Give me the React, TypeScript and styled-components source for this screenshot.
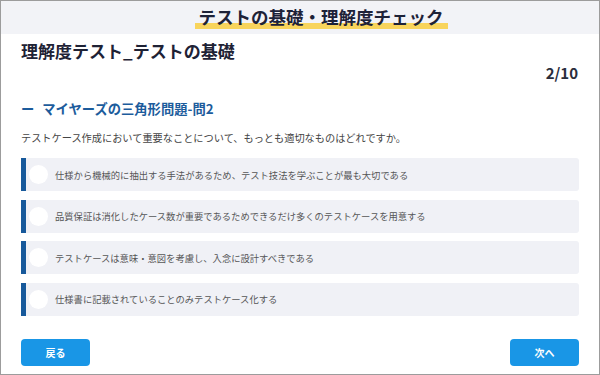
import React from 'react'
import styled, { createGlobalStyle } from 'styled-components'

const GlobalStyle = createGlobalStyle`
  * {
    box-sizing: border-box;
  }

  body {
    margin: 0;
    background: #ffffff;
    font-family: 'Noto Sans CJK JP', 'Noto Sans', sans-serif;
  }
`

const Page = styled.div`
  width: 600px;
  height: 375px;
  border: 1px solid #9c9c9c;
  display: flex;
  flex-direction: column;
  background: #ffffff;
`

const Header = styled.header`
  height: 33px;
  flex-shrink: 0;
  background: #f2f3f7;
  display: flex;
  justify-content: center;
  align-items: flex-start;
  padding: 5px 0 0 42px;
`

const HeaderTitle = styled.h1`
  margin: 0;
  padding: 0 4px 1px;
  font-size: 17.5px;
  line-height: 22px;
  font-weight: 700;
  color: #1d2238;
  background: linear-gradient(to bottom, transparent 17px, #f8d45c 17px);
`

const Content = styled.main`
  flex: 1;
  display: flex;
  flex-direction: column;
  padding: 5px 20px 0;
`

const TestTitle = styled.h2`
  margin: 0;
  font-size: 17px;
  line-height: 23px;
  font-weight: 700;
  color: #1e2235;
`

const Progress = styled.div`
  margin-top: 2px;
  text-align: right;
  font-size: 15px;
  line-height: 18px;
  font-weight: 700;
  color: #2a2e3c;
  padding-right: 1px;
`

const SectionHeading = styled.h3`
  margin: 16.5px 0 0;
  font-size: 13.3px;
  line-height: 20px;
  font-weight: 700;
  color: #1c5c9c;
  display: flex;
  gap: 8px;
`

const Question = styled.p`
  margin: 11.5px 0 0;
  font-size: 10.2px;
  line-height: 16px;
  color: #454545;
`

const OptionList = styled.div`
  margin-top: 12px;
  display: flex;
  flex-direction: column;
  gap: 8.5px;
`

const Option = styled.label`
  height: 33px;
  display: flex;
  align-items: center;
  gap: 7px;
  padding-left: 3px;
  background: #f0f1f6;
  border-left: 5px solid #17599b;
  border-radius: 0 3px 3px 0;
  cursor: pointer;
`

const Radio = styled.span`
  width: 19px;
  height: 19px;
  border-radius: 50%;
  background: #ffffff;
  flex-shrink: 0;
`

const OptionText = styled.span`
  font-size: 9.3px;
  color: #565656;
`

const Footer = styled.footer`
  margin-top: 23.5px;
  display: flex;
  justify-content: space-between;
`

const NavButton = styled.button`
  width: 69px;
  height: 27px;
  border: none;
  border-radius: 4px;
  background: #1996e6;
  color: #ffffff;
  font-family: inherit;
  font-size: 10px;
  font-weight: 700;
  cursor: pointer;
`

const options = [
  '仕様から機械的に抽出する手法があるため、テスト技法を学ぶことが最も大切である',
  '品質保証は消化したケース数が重要であるためできるだけ多くのテストケースを用意する',
  'テストケースは意味・意図を考慮し、入念に設計すべきである',
  '仕様書に記載されていることのみテストケース化する',
]

export default function App() {
  return (
    <>
      <GlobalStyle />
      <Page>
        <Header>
          <HeaderTitle>テストの基礎・理解度チェック</HeaderTitle>
        </Header>
        <Content>
          <TestTitle>理解度テスト_テストの基礎</TestTitle>
          <Progress>2/10</Progress>
          <SectionHeading>
            <span>ー</span>
            <span>マイヤーズの三角形問題-問2</span>
          </SectionHeading>
          <Question>
            テストケース作成において重要なことについて、もっとも適切なものはどれですか。
          </Question>
          <OptionList>
            {options.map(text => (
              <Option key={text}>
                <Radio />
                <OptionText>{text}</OptionText>
              </Option>
            ))}
          </OptionList>
          <Footer>
            <NavButton>戻る</NavButton>
            <NavButton>次へ</NavButton>
          </Footer>
        </Content>
      </Page>
    </>
  )
}
